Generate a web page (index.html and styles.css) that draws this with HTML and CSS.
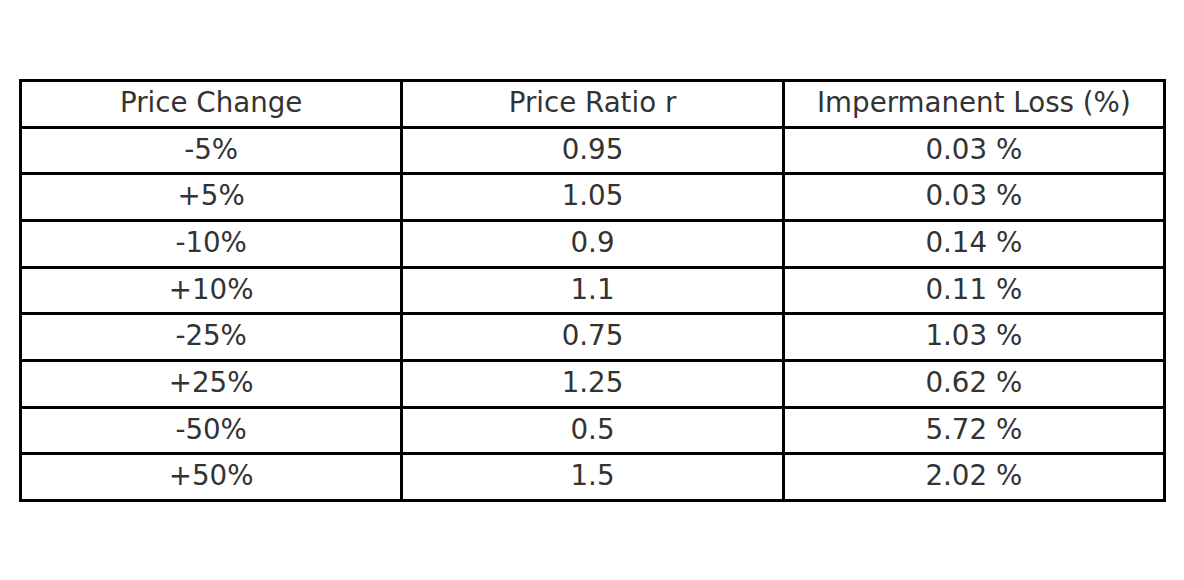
FILE: index.html
```html
<!DOCTYPE html>
<html>
<head>
<meta charset="utf-8">
<link rel="stylesheet" href="styles.css">
</head>
<body>
<div class="wrap">
<table class="il-table">
  <thead>
    <tr><th>Price Change</th><th>Price Ratio r</th><th>Impermanent Loss (%)</th></tr>
  </thead>
  <tbody>
    <tr><td>-5%</td><td>0.95</td><td>0.03 %</td></tr>
    <tr><td>+5%</td><td>1.05</td><td>0.03 %</td></tr>
    <tr><td>-10%</td><td>0.9</td><td>0.14 %</td></tr>
    <tr><td>+10%</td><td>1.1</td><td>0.11 %</td></tr>
    <tr><td>-25%</td><td>0.75</td><td>1.03 %</td></tr>
    <tr><td>+25%</td><td>1.25</td><td>0.62 %</td></tr>
    <tr><td>-50%</td><td>0.5</td><td>5.72 %</td></tr>
    <tr><td>+50%</td><td>1.5</td><td>2.02 %</td></tr>
  </tbody>
</table>
</div>
</body>
</html>
```
FILE: styles.css
```css
html, body {
  margin: 0;
  padding: 0;
  background: #fff;
}
.wrap {
  padding: 79px 0 0 19px;
}
.il-table {
  border-collapse: collapse;
  width: 1147px;
  table-layout: fixed;
  font-family: "DejaVu Sans", sans-serif;
  font-size: 27.7px;
  color: #333;
}
.il-table th,
.il-table td {
  border: 3px solid #000;
  height: 41.67px;
  padding: 0 0 2px;
  text-align: center;
  vertical-align: middle;
  font-weight: normal;
  line-height: 1;
}
```
